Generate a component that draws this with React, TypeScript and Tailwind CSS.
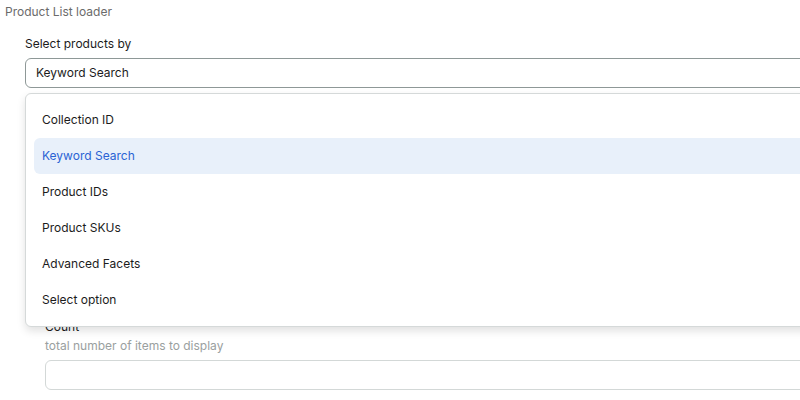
import { useState } from "react";

const opcoes = [
  "Collection ID",
  "Keyword Search",
  "Product IDs",
  "Product SKUs",
  "Advanced Facets",
  "Select option",
];

export default function App() {
  const [selecionado, setSelecionado] = useState("Keyword Search");

  return (
    <div
      className="w-[800px] h-[400px] overflow-hidden bg-white text-[12px] text-[#1c1c1c]"
      style={{ fontFamily: "Inter, 'Liberation Sans', sans-serif" }}
    >
      <div className="w-[1000px]">
        <p className="pl-[5px] pt-[4px] leading-[16px] text-[#6b6b6b]">
          Product List loader
        </p>

        <div className="pl-[25px] pt-[16px]">
          <label className="block leading-[16px]">Select products by</label>

          {/* select + dropdown aberto */}
          <div className="relative mt-[6px]">
            <div className="h-[30px] rounded-[6px] border border-[#8e9897] flex items-center pl-[10px]">
              {selecionado}
            </div>

            <div className="mt-[6px] h-[30px] rounded-[6px] border border-[#d3d8d7]" />

            <div className="absolute left-0 right-0 top-[35px] z-10 rounded-[6px] border border-[#d5d9d9] bg-white p-[8px] shadow-[0_4px_8px_rgba(0,0,0,0.12)]">
              {opcoes.map((opcao) => {
                const ativo = opcao === selecionado;
                return (
                  <div
                    key={opcao}
                    onClick={() => setSelecionado(opcao)}
                    className={
                      ativo
                        ? "h-[36px] flex items-center px-[8px] rounded-[6px] bg-[#e8f0fa] text-[#2a63d4]"
                        : "h-[36px] flex items-center px-[8px] rounded-[6px]"
                    }
                  >
                    {opcao}
                  </div>
                );
              })}
            </div>
          </div>

          {/* campos escondidos atrás do menu */}
          <div className="pl-[20px] pt-[20px]">
            <div className="h-[20px]" />
            <div className="h-[30px] rounded-[6px] border border-[#d3d8d7]" />
            <div className="h-[20px]" />
            <div className="h-[30px] rounded-[6px] border border-[#d3d8d7]" />
            <div className="h-[75px]" />
            <label className="block leading-[16px]">Count</label>
            <p className="mt-[3px] leading-[16px] text-[#9aa0a0]">
              total number of items to display
            </p>
            <div className="mt-[6px] h-[30px] rounded-[6px] border border-[#d3d8d7]" />
          </div>
        </div>
      </div>
    </div>
  );
}
